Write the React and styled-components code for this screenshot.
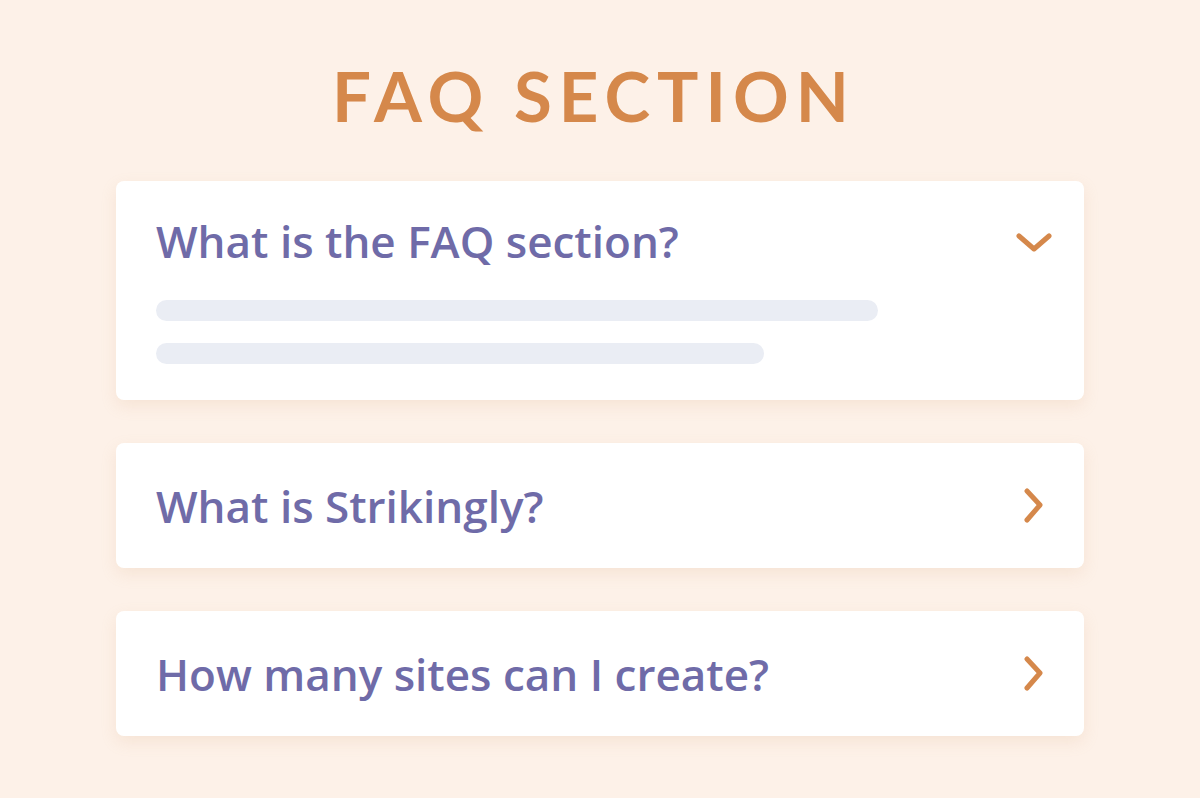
import React from "react";
import styled, { createGlobalStyle } from "styled-components";

const GlobalStyle = createGlobalStyle`
  html, body {
    margin: 0;
    padding: 0;
    background: #fdf1e8;
  }
  body {
    font-family: "Open Sans", "Noto Sans", sans-serif;
  }
`;

const Page = styled.main`
  min-height: 798px;
  display: flex;
  flex-direction: column;
  align-items: center;
  padding-top: 56px;
  box-sizing: border-box;
`;

const Title = styled.h1`
  margin: 0 0 45px;
  padding-right: 12px;
  font-family: "Lato", sans-serif;
  font-weight: 700;
  font-size: 69px;
  line-height: 80px;
  letter-spacing: 7px;
  color: #d5884b;
`;

const List = styled.div`
  width: 968px;
  display: flex;
  flex-direction: column;
  gap: 43px;
`;

const Card = styled.section`
  background: #ffffff;
  border-radius: 8px;
  box-shadow: 0 6px 16px rgba(214, 160, 120, 0.16);
  padding: ${(p) => (p.$open ? "30px 32px 36px 40px" : "0 32px 0 40px")};
  box-sizing: border-box;
  height: ${(p) => (p.$open ? "219px" : "125px")};
  display: flex;
  flex-direction: column;
  justify-content: ${(p) => (p.$open ? "flex-start" : "center")};
`;

const Head = styled.div`
  display: flex;
  align-items: center;
  justify-content: space-between;
`;

const Question = styled.h2`
  margin: 0;
  font-family: "Open Sans", sans-serif;
  font-weight: 600;
  font-size: 44px;
  line-height: 60px;
  color: #6f6ba8;
`;

const Toggle = styled.span`
  width: 36px;
  height: 36px;
  display: flex;
  align-items: center;
  justify-content: center;
  padding-top: ${(p) => (p.$open ? "4px" : "0")};
`;

const Lines = styled.div`
  display: flex;
  flex-direction: column;
  gap: 22px;
  margin-top: 29px;
`;

const Line = styled.div`
  height: 21px;
  border-radius: 11px;
  background: #eaedf4;
  width: ${(p) => p.$w}px;
`;

const ChevronDown = () => (
  <svg width="36" height="22" viewBox="0 0 36 22" fill="none">
    <path d="M3 4 L18 17 L33 4" stroke="#d5884b" strokeWidth="5" strokeLinecap="round" strokeLinejoin="round" />
  </svg>
);

const ChevronRight = () => (
  <svg width="22" height="36" viewBox="0 0 22 36" fill="none">
    <path d="M4 3 L17 17 L4 32" stroke="#d5884b" strokeWidth="5" strokeLinecap="round" strokeLinejoin="round" />
  </svg>
);

const items = [
  { q: "What is the FAQ section?", open: true },
  { q: "What is Strikingly?", open: false },
  { q: "How many sites can I create?", open: false },
];

export default function App() {
  return (
    <>
      <GlobalStyle />
      <Page>
        <Title>FAQ SECTION</Title>
        <List>
          {items.map((item) => (
            <Card key={item.q} $open={item.open}>
              <Head>
                <Question>{item.q}</Question>
                <Toggle $open={item.open}>{item.open ? <ChevronDown /> : <ChevronRight />}</Toggle>
              </Head>
              {item.open && (
                <Lines>
                  <Line $w={722} />
                  <Line $w={608} />
                </Lines>
              )}
            </Card>
          ))}
        </List>
      </Page>
    </>
  );
}
